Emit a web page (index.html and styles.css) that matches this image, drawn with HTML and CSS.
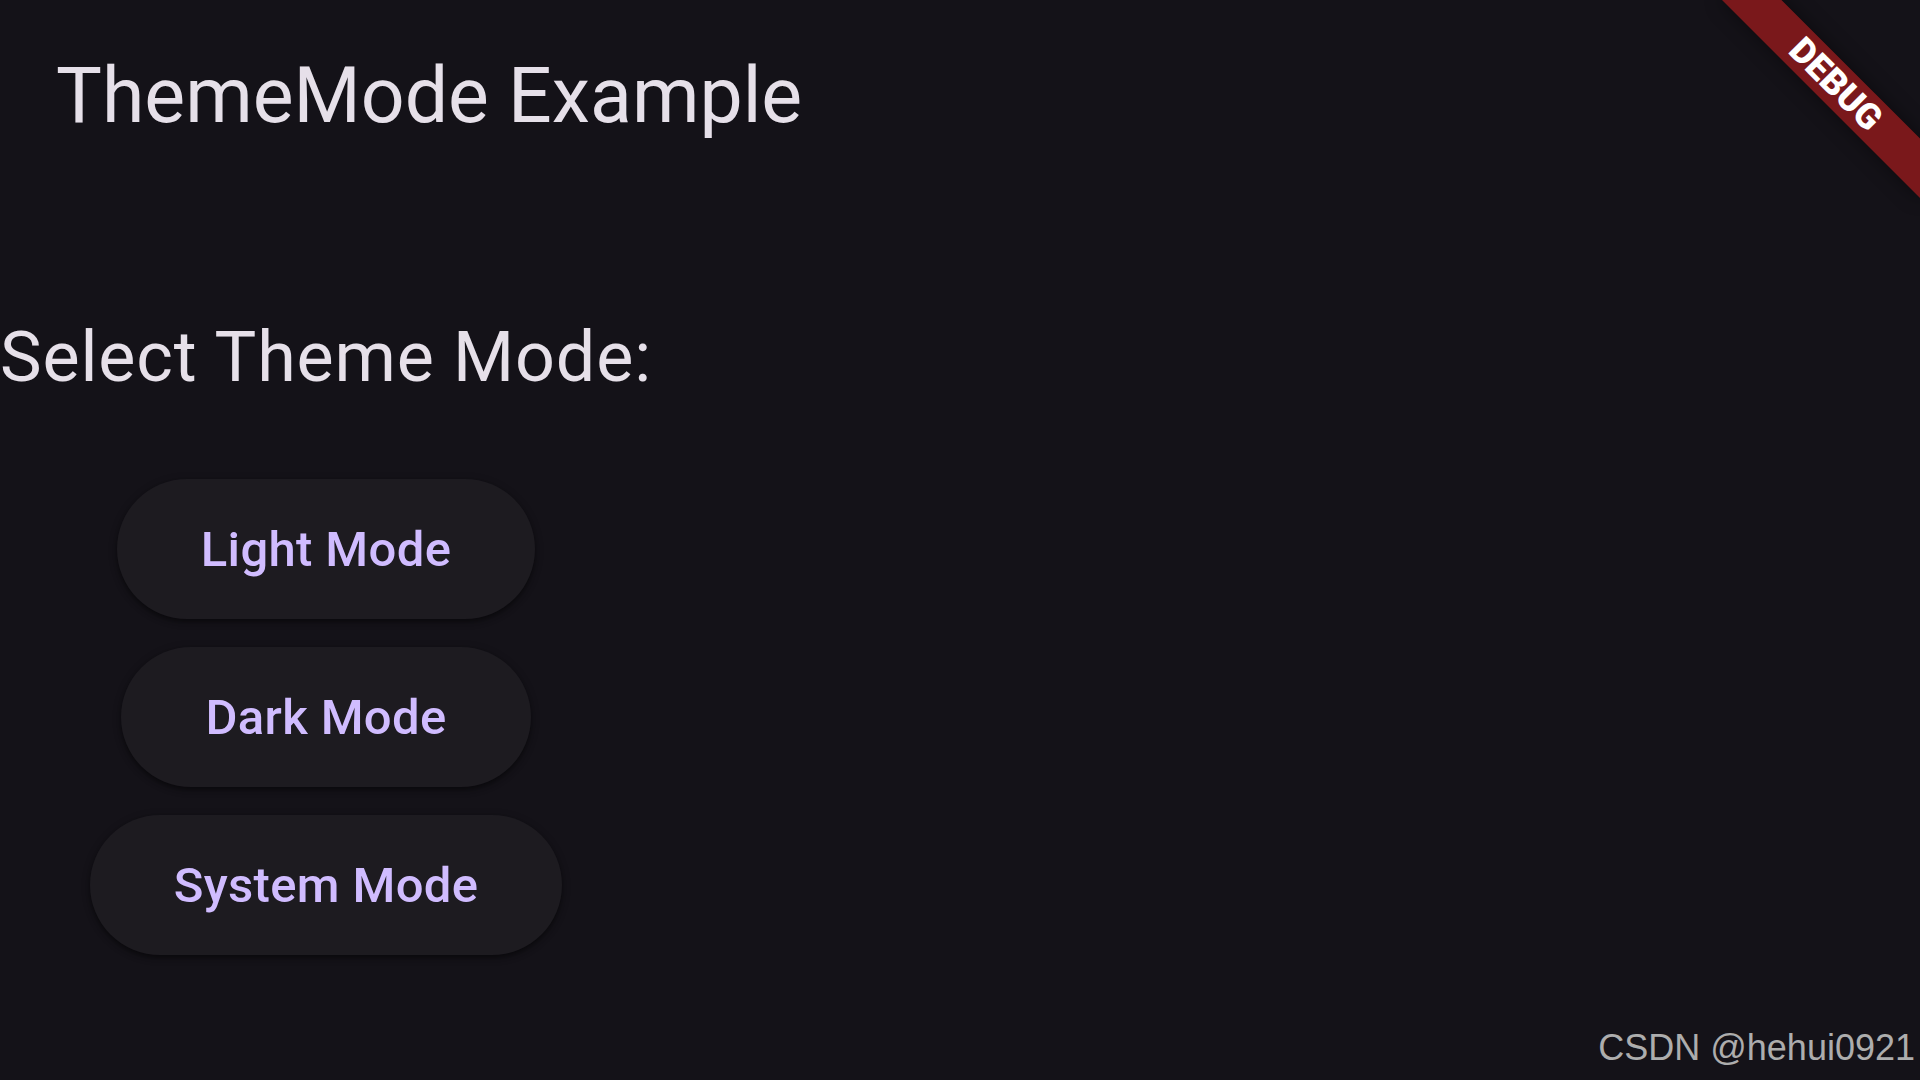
FILE: index.html
```html
<!DOCTYPE html>
<html lang="en">
<head>
<meta charset="utf-8">
<title>ThemeMode Example</title>
<link rel="stylesheet" href="styles.css">
</head>
<body>
  <header class="appbar">
    <h1 class="appbar-title">ThemeMode Example</h1>
  </header>
  <main class="content">
    <div class="column">
      <p class="prompt">Select Theme Mode:</p>
      <div class="buttons">
        <button class="mode-btn" type="button">Light Mode</button>
        <button class="mode-btn" type="button">Dark Mode</button>
        <button class="mode-btn" type="button">System Mode</button>
      </div>
    </div>
  </main>
  <div class="debug-banner"><span class="debug-label">DEBUG</span></div>
  <div class="watermark">CSDN @hehui0921</div>
</body>
</html>
```

FILE: styles.css
```css
html, body {
  margin: 0;
  padding: 0;
  width: 1920px;
  height: 1080px;
  overflow: hidden;
}

body {
  position: relative;
  background: #141218;
  font-family: Roboto, "Noto Sans", "Liberation Sans", sans-serif;
  color: #E6E0E9;
}

.appbar {
  box-sizing: border-box;
  height: 224px;
  padding: 47px 0 0 56px;
}

.appbar-title {
  margin: 0;
  font-size: 77px;
  font-weight: 400;
  line-height: 98px;
  white-space: nowrap;
  color: #E6E0E9;
}

.content {
  padding-top: 92px;
}

.column {
  display: inline-flex;
  flex-direction: column;
  align-items: center;
}

.prompt {
  margin: 0;
  font-size: 70px;
  font-weight: 400;
  letter-spacing: 0.875px;
  line-height: 82px;
  white-space: nowrap;
  color: #E6E0E9;
}

.buttons {
  margin-top: 81px;
  display: flex;
  flex-direction: column;
  align-items: center;
  gap: 28px;
}

.mode-btn {
  box-sizing: border-box;
  height: 140px;
  padding: 0 84px;
  border: none;
  border-radius: 70px;
  background: #1D1B20;
  color: #D0BCFF;
  font-family: Roboto, "Noto Sans", "Liberation Sans", sans-serif;
  font-size: 49px;
  font-weight: 500;
  letter-spacing: 0.35px;
  line-height: 57px;
  white-space: nowrap;
  box-shadow: 0 3px 4px rgba(0, 0, 0, 0.35), 0 2px 10px rgba(0, 0, 0, 0.2);
}

.debug-banner {
  position: absolute;
  left: 1780px;
  top: 98px;
  width: 280px;
  height: 42px;
  transform-origin: 140px -98px;
  transform: rotate(45deg);
  background: rgba(183, 28, 28, 0.627);
  box-shadow: 0 0 20px rgba(0, 0, 0, 0.45);
  display: flex;
  align-items: center;
  justify-content: center;
}

.debug-label {
  font-family: Roboto, "Noto Sans", "Liberation Sans", sans-serif;
  font-size: 35.7px;
  font-weight: 900;
  line-height: 36px;
  color: #FFFFFF;
}

.watermark {
  position: absolute;
  right: 5px;
  top: 1027px;
  font-family: "Liberation Sans", Arial, sans-serif;
  font-size: 36px;
  line-height: 41px;
  color: #ADADAD;
  white-space: nowrap;
}
```
